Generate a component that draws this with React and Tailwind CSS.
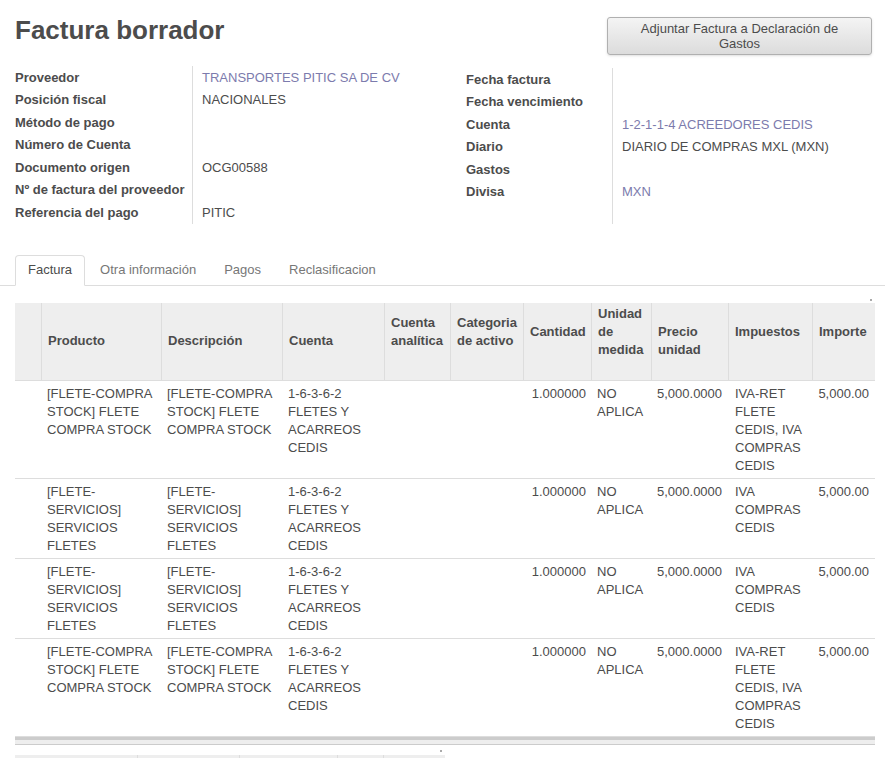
import React from 'react'

const leftFields = [
  { label: 'Proveedor', value: 'TRANSPORTES PITIC SA DE CV', link: true },
  { label: 'Posición fiscal', value: 'NACIONALES' },
  { label: 'Método de pago', value: '' },
  { label: 'Número de Cuenta', value: '' },
  { label: 'Documento origen', value: 'OCG00588' },
  { label: 'Nº de factura del proveedor', value: '' },
  { label: 'Referencia del pago', value: 'PITIC' },
]

const rightFields = [
  { label: 'Fecha factura', value: '' },
  { label: 'Fecha vencimiento', value: '' },
  { label: 'Cuenta', value: '1-2-1-1-4 ACREEDORES CEDIS', link: true },
  { label: 'Diario', value: 'DIARIO DE COMPRAS MXL (MXN)' },
  { label: 'Gastos', value: '' },
  { label: 'Divisa', value: 'MXN', link: true },
]

// widths + header top padding per column
const cols = [
  { w: 'w-[26px]', label: [], pt: 'pt-[29px]' },
  { w: 'w-[120px]', label: ['Producto'], pt: 'pt-[29px]' },
  { w: 'w-[121px]', label: ['Descripción'], pt: 'pt-[29px]' },
  { w: 'w-[102px]', label: ['Cuenta'], pt: 'pt-[29px]' },
  { w: 'w-[66px]', label: ['Cuenta', 'analítica'], pt: 'pt-[11px]' },
  { w: 'w-[73px]', label: ['Categoria', 'de activo'], pt: 'pt-[11px]' },
  { w: 'w-[68px]', label: ['Cantidad'], pt: 'pt-[20px]' },
  { w: 'w-[60px]', label: ['Unidad', 'de', 'medida'], pt: 'pt-[2px]' },
  { w: 'w-[77px]', label: ['Precio', 'unidad'], pt: 'pt-[20px]' },
  { w: 'w-[84px]', label: ['Impuestos'], pt: 'pt-[20px]' },
  { w: 'w-[63px]', label: ['Importe'], pt: 'pt-[20px]' },
]

const stock = {
  prod: ['[FLETE-COMPRA', 'STOCK] FLETE', 'COMPRA STOCK'],
  tax: ['IVA-RET', 'FLETE', 'CEDIS, IVA', 'COMPRAS', 'CEDIS'],
}
const serv = {
  prod: ['[FLETE-', 'SERVICIOS]', 'SERVICIOS', 'FLETES'],
  tax: ['IVA', 'COMPRAS', 'CEDIS'],
}
const cuenta = ['1-6-3-6-2', 'FLETES Y', 'ACARREOS', 'CEDIS']
const lines = [stock, serv, serv, stock]

const Lines = ({ items }) => items.map((t, i) => <div key={i}>{t}</div>)

const FieldGroup = ({ fields, labelW, className }) => (
  <div className={`flex ${className}`}>
    <div className={`${labelW} border-r border-[#ddd]`}>
      {fields.map((f) => (
        <div key={f.label} className="h-[22.5px] flex items-center font-bold">{f.label}</div>
      ))}
    </div>
    <div className="pl-[9px] flex-1">
      {fields.map((f) => (
        <div key={f.label} className={`h-[22.5px] flex items-center ${f.link ? 'text-[#7c7bad]' : ''}`}>{f.value}</div>
      ))}
    </div>
  </div>
)

export default function App() {
  return (
    <div className="w-[885px] h-[758px] overflow-hidden bg-white text-[13px] text-[#4c4c4c]" style={{ fontFamily: '"Liberation Sans", Arial, sans-serif' }}>
      <div className="flex justify-between pl-[15px] pr-[13px] pt-[14px]">
        <h1 className="text-[26px] font-bold leading-[32px] text-[#4c4c4c]">Factura borrador</h1>
        <button className="mt-[3px] w-[265px] h-[38px] rounded-[3px] border border-[#b0b0b0] bg-gradient-to-b from-[#f4f4f4] to-[#dcdcdc] shadow-sm text-[13px] leading-[15px] text-[#4c4c4c]">
          Adjuntar Factura a Declaración de<br />Gastos
        </button>
      </div>

      <div className="flex pl-[15px] mt-[11px]">
        <FieldGroup fields={leftFields} labelW="w-[178px]" className="w-[451px]" />
        <FieldGroup fields={rightFields} labelW="w-[147px]" className="flex-1 pt-[2px]" />
      </div>

      <div className="mt-[31px] border-b border-[#ddd] flex pl-[15px] h-[31px]">
        <div className="px-[12px] border border-[#ddd] border-b-white rounded-t-[4px] bg-white -mb-px flex items-center">Factura</div>
        <div className="px-[15px] flex items-center text-[#777]">Otra información</div>
        <div className="px-[13px] flex items-center text-[#777]">Pagos</div>
        <div className="px-[15px] flex items-center text-[#777]">Reclasificacion</div>
      </div>

      <div className="relative mx-[15px] mt-[17px] w-[860px]">
        <div className="absolute right-[3px] -top-[4px] w-[2px] h-[2px] bg-[#aaa]"></div>
        <div className="flex bg-[#eee] h-[78px] border-b border-[#ddd] font-bold leading-[18px]">
          {cols.map((c, i) => (
            <div key={i} className={`${c.w} ${c.pt} px-[6px] ${i > 0 ? 'border-l border-[#ddd]' : ''}`}>
              <Lines items={c.label} />
            </div>
          ))}
        </div>
        {lines.map((l, r) => (
          <div key={r} className="flex leading-[18px] pt-[4px] pb-[3px] border-b border-[#ddd]">
            <div className="w-[26px]"></div>
            <div className="w-[120px] px-[6px]"><Lines items={l.prod} /></div>
            <div className="w-[121px] px-[6px]"><Lines items={l.prod} /></div>
            <div className="w-[102px] px-[6px]"><Lines items={cuenta} /></div>
            <div className="w-[66px]"></div>
            <div className="w-[73px]"></div>
            <div className="w-[68px] px-[5px] text-right">1.000000</div>
            <div className="w-[60px] px-[6px]"><Lines items={['NO', 'APLICA']} /></div>
            <div className="w-[77px] px-[6px] text-right">5,000.0000</div>
            <div className="w-[84px] px-[7px]"><Lines items={l.tax} /></div>
            <div className="w-[63px] px-[6px] text-right">5,000.00</div>
          </div>
        ))}
        <div className="border-t-[3px] border-[#ccc] bg-[#eee] h-[8px] border-b border-b-[#ccc]"></div>
      </div>

      <div className="relative ml-[15px] mt-[10px] w-[430px] h-[10px] bg-[#eee] flex">
        <div className="absolute right-[3px] -top-[5px] w-[2px] h-[2px] bg-[#aaa]"></div>
        <div className="w-[123px] border-r border-[#ddd]"></div>
        <div className="w-[102px] border-r border-[#ddd]"></div>
        <div className="w-[98px] border-r border-[#ddd]"></div>
        <div className="w-[46px] border-r border-[#ddd]"></div>
      </div>
    </div>
  )
}
